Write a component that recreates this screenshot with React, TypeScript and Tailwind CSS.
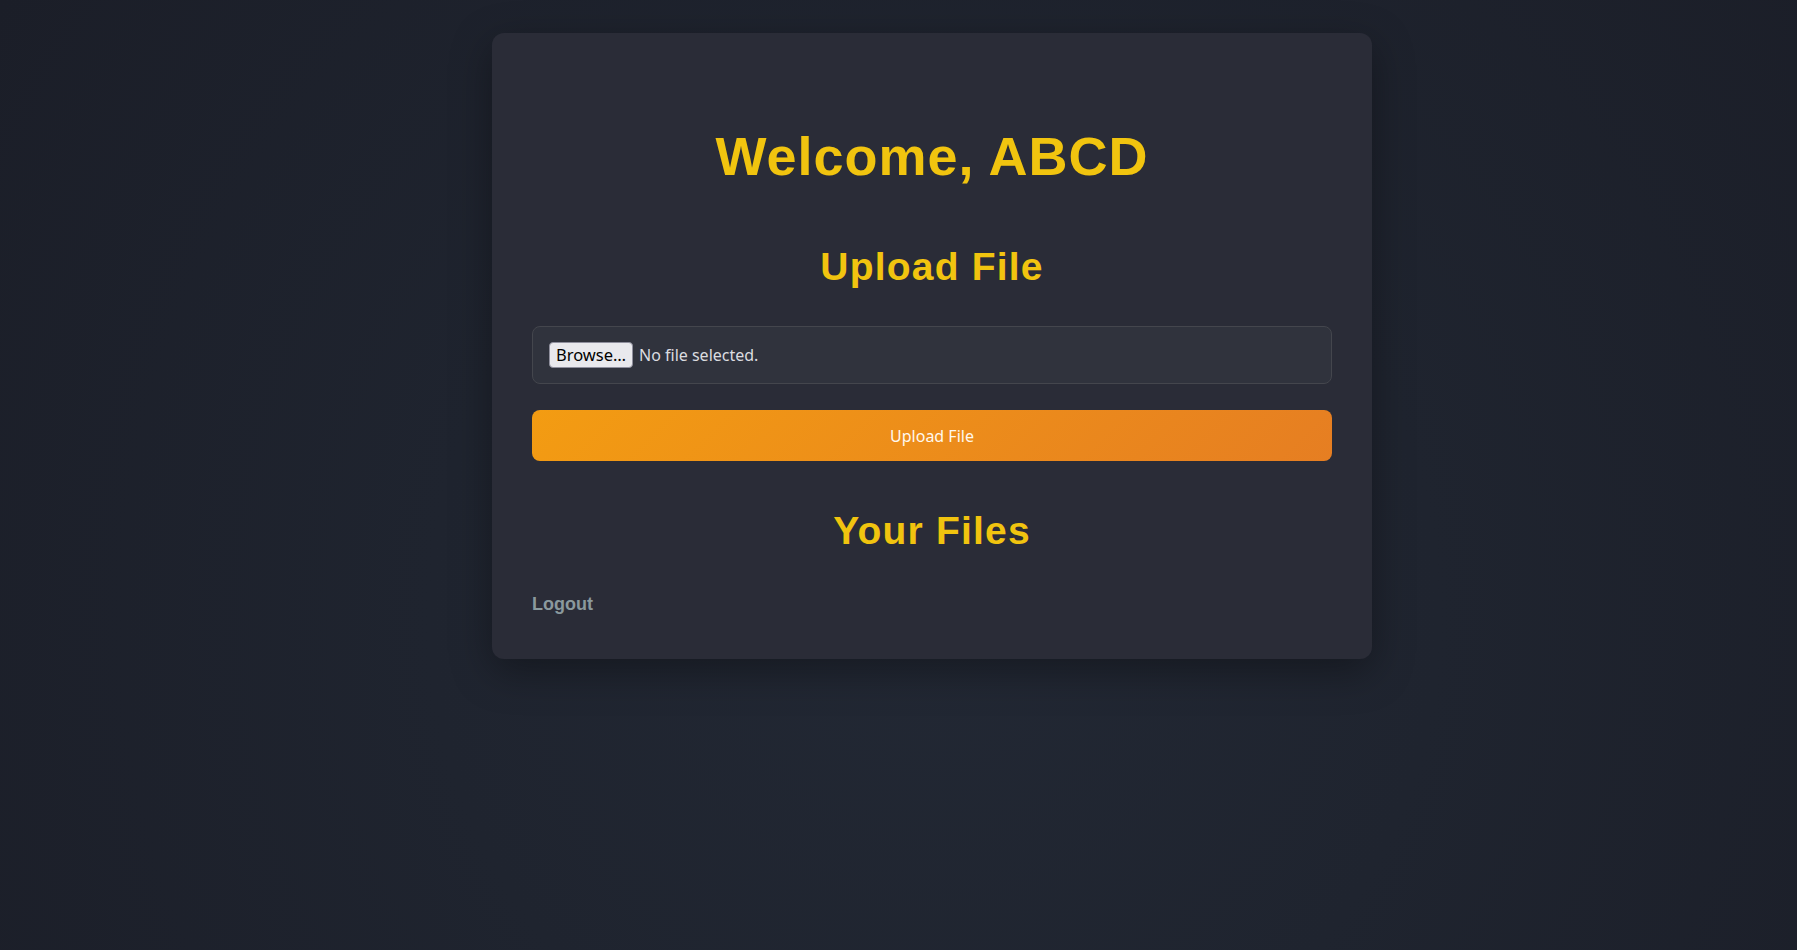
export default function App() {
  const heading = "font-['Liberation_Sans',Arial,sans-serif] font-bold text-[#f1c40f] text-center leading-none";

  return (
    <div className="min-h-screen bg-[radial-gradient(circle_at_52%_65%,#222834_0%,#1f242f_45%,#1b1e28_100%)] font-['Noto_Sans',sans-serif]">
      <div className="flex justify-center pl-[67px] pt-[33px]">
        {/* Dashboard card */}
        <div className="w-[880px] rounded-xl bg-[#2a2c37] px-10 pt-[96px] pb-[46px] shadow-[0_12px_40px_rgba(0,0,0,0.35)]">
          <h1 className={`${heading} text-[54px] tracking-[1px]`}>Welcome, ABCD</h1>

          <h2 className={`${heading} text-[39px] tracking-[1.2px] mt-[64px]`}>Upload File</h2>

          {/* File picker, drawn the way Firefox shows it */}
          <div className="mt-10 h-[58px] flex items-center gap-[6px] px-4 rounded-lg border border-[#44464d] bg-[#30333d]">
            <button
              type="button"
              className="h-[26px] w-[84px] flex items-center justify-center rounded-[4px] border border-[#8f8f9d] bg-[#e9e9ed] text-[16.5px] text-black leading-none"
            >
              Browse…
            </button>
            <span className="text-[16px] text-[#dcdde0]">No file selected.</span>
          </div>

          <button
            type="button"
            className="mt-[26px] h-[51px] w-full rounded-lg bg-[linear-gradient(135deg,#f39c12,#e67e22)] text-[16px] text-[#fff8ee]"
          >
            Upload File
          </button>

          <h2 className={`${heading} text-[39px] tracking-[1.2px] mt-[50px]`}>Your Files</h2>

          <a
            href="#"
            className="block w-fit mt-[45px] font-['Liberation_Sans',Arial,sans-serif] font-bold text-[18px] leading-none text-[#8a999d]"
          >
            Logout
          </a>
        </div>
      </div>
    </div>
  );
}
